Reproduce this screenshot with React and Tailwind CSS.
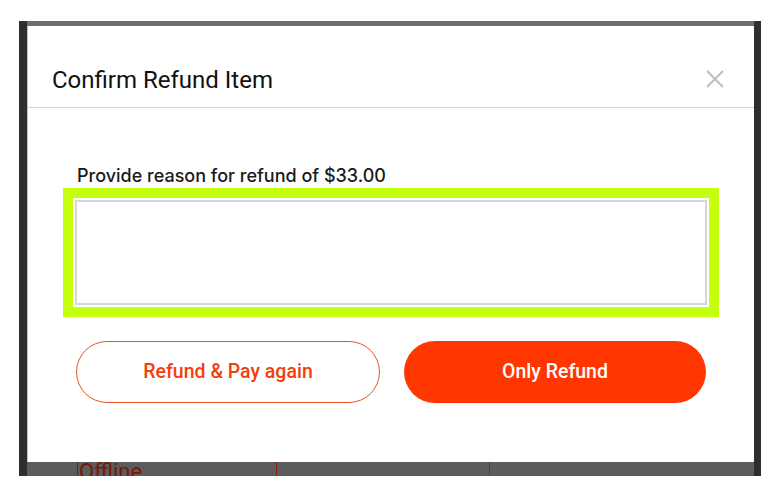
export default function App() {
  return (
    <div className="w-[776px] h-[496px] bg-white pt-[21px] pl-[19px]" style={{ fontFamily: "Roboto, 'Liberation Sans', sans-serif" }}>
      <div className="w-[742px] h-[455px] bg-[#2e2e2e] pl-[8px] pr-[7px] flex flex-col">
        <div className="h-[5px] bg-[#6e6e6e] shrink-0" />
        <div className="h-[436px] bg-white shrink-0 flex flex-col border-l border-[#bdbdbd]">
          <div className="h-[82px] flex items-center justify-between pl-[24px] pr-[30px] border-b border-[#d0d0d0] pt-[26px]">
            <h2 className="text-[24px] leading-none text-[#111111] font-normal">Confirm Refund Item</h2>
            <svg width="18" height="18" viewBox="0 0 18 18" className="text-[#bdbdbd] mt-[-2px]">
              <path d="M1 1 L17 17 M17 1 L1 17" stroke="currentColor" strokeWidth="2" fill="none" />
            </svg>
          </div>
          <div className="pl-[35px] pr-[35px] pt-[57px]">
            <label className="block pl-[14px] text-[18px] leading-[22px] text-[#1a1a1a] font-medium" style={{ fontFamily: "Inter, Roboto, sans-serif" }}>
              Provide reason for refund of $33.00
            </label>
            <div className="mt-[1px] border-[10px] border-[#c4ff0e] p-[2px]">
              <textarea className="block w-full h-[105px] border-2 border-[#d4d7de] resize-none outline-none" />
            </div>
            <div className="mt-[24px] flex gap-[24px] px-[13px]">
              <button className="flex-1 h-[62px] rounded-full border border-[#e8532b] bg-white text-[#f2400c] text-[19.5px] font-medium">
                Refund &amp; Pay again
              </button>
              <button className="flex-1 h-[62px] rounded-full bg-[#ff3600] text-white text-[19.5px] font-medium">
                Only Refund
              </button>
            </div>
          </div>
        </div>
        <div className="flex-1 bg-[#5c5c5c] flex items-start overflow-hidden">
          <div className="ml-[50px] w-[200px] h-full border-l border-r border-[#8b1a0a] pl-[1px] text-[22px] leading-[20px] text-[#7a1508]">Offline</div>
          <div className="ml-[13px] w-[200px] h-full border-r border-[#444]" />
        </div>
      </div>
    </div>
  );
}
